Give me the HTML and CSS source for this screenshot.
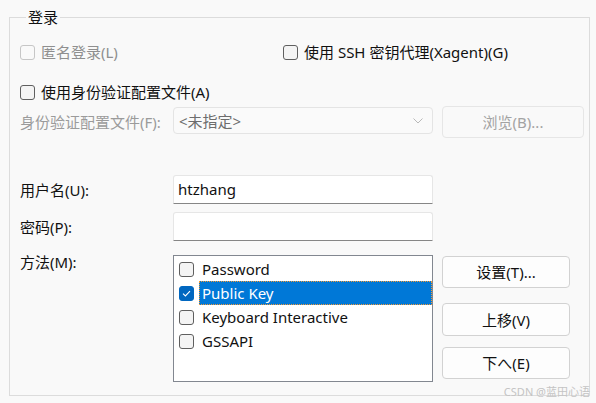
FILE: index.html
```html
<!DOCTYPE html>
<html lang="zh">
<head>
<meta charset="utf-8">
<link rel="stylesheet" href="styles.css">
</head>
<body>
<fieldset class="group">
  <legend class="legend">登录</legend>

  <div class="row row-top">
    <label class="check disabled anon"><span class="box"></span>匿名登录(L)</label>
    <label class="check"><span class="box"></span>使用 SSH 密钥代理(Xagent)(G)</label>
  </div>

  <div class="row row-auth">
    <label class="check"><span class="box"></span>使用身份验证配置文件(A)</label>
  </div>

  <div class="row row-file">
    <span class="lbl disabled">身份验证配置文件(F):</span>
    <div class="combo">
      <span>&lt;未指定&gt;</span>
      <svg class="chev" width="10" height="6" viewBox="0 0 10 6"><path d="M0.5 0.5 L5 5 L9.5 0.5" fill="none" stroke="#b9b9b9" stroke-width="1"/></svg>
    </div>
    <button class="btn btn-browse" disabled>浏览(B)...</button>
  </div>

  <div class="row row-user">
    <span class="lbl">用户名(U):</span>
    <div class="input">htzhang</div>
  </div>

  <div class="row row-pass">
    <span class="lbl">密码(P):</span>
    <div class="input"></div>
  </div>

  <div class="row row-method">
    <span class="lbl lbl-method">方法(M):</span>
    <div class="list">
      <div class="item"><span class="box"></span><span class="itext">Password</span></div>
      <div class="item"><span class="box checked"><svg width="15" height="15" viewBox="0 0 15 15"><path d="M4 7.6 L6.4 10 L11 5.2" fill="none" stroke="#fff" stroke-width="1.1"/></svg></span><span class="itext sel">Public Key</span></div>
      <div class="item"><span class="box"></span><span class="itext">Keyboard Interactive</span></div>
      <div class="item"><span class="box"></span><span class="itext">GSSAPI</span></div>
    </div>
    <div class="btns">
      <button class="btn b1">设置(T)...</button>
      <button class="btn b2">上移(V)</button>
      <button class="btn b3">下へ(E)</button>
    </div>
  </div>
</fieldset>
<div class="watermark">CSDN @蓝田心语</div>
</body>
</html>
```
FILE: styles.css
```css
html, body {
  margin: 0;
  padding: 0;
  background: #f9f9f9;
  width: 596px;
  height: 403px;
  overflow: hidden;
  font-family: "Noto Sans", "Noto Sans CJK SC", sans-serif;
  font-size: 15px;
  color: #111;
}
body { position: relative; }

.group {
  margin: 8px 0 0 9px;
  width: 581px;
  height: 388px;
  padding: 0 0 0 10px;
  border: 1px solid #dcdcdc;
  box-sizing: border-box;
  min-width: 0;
}
.legend {
  margin-left: 6px;
  padding: 0 2px;
  line-height: 18px;
  height: 18px;
  font-size: 15px;
}

.row {
  display: flex;
  align-items: center;
}
.row-top { margin-top: 14px; height: 24px; }
.row-auth { margin-top: 16px; height: 24px; }
.row-file { margin-top: 2px; height: 32px; align-items: flex-start; }
.row-user { margin-top: 37px; height: 29px; }
.row-pass { margin-top: 8px; height: 29px; }
.row-method { margin-top: 11px; align-items: flex-start; }

.check {
  display: flex;
  align-items: center;
  line-height: 20px;
  white-space: nowrap;
}
.check .box { margin-right: 6px; }
.anon { width: 263px; flex: none; }

.box {
  display: inline-block;
  width: 13px;
  height: 13px;
  border: 1px solid #5f5f5f;
  border-radius: 3px;
  background: #f4f4f4;
  flex: none;
}
.disabled { color: #8f8f8f; }
.check.disabled .box { border-color: #c6c6c6; background: #f9f9f9; }

.lbl {
  width: 153px;
  flex: none;
  line-height: 20px;
  white-space: nowrap;
}
.row-file .lbl { margin-top: 6px; color: #9b9b9b; }

.combo {
  margin-top: 1px;
  border: 1px solid #e4e4e4;
  border-radius: 4px;
  background: #fafafa;
  display: flex;
  align-items: center;
  justify-content: space-between;
  padding: 0 9px 0 5px;
  box-sizing: border-box;
  width: 260px;
  height: 27px;
  color: #6d6d6d;
}

.btn {
  font-family: inherit;
  font-size: 15px;
  border: 1px solid #d2d2d2;
  border-radius: 4px;
  background: #fdfdfd;
  color: #111;
  padding: 0;
  height: 32px;
  line-height: 20px;
  box-sizing: border-box;
}
.btn-browse {
  margin-left: 9px;
  width: 142px;
  border-color: #e6e6e6;
  background: #f9f9f9;
  color: #a3a3a3;
}

.input {
  width: 260px;
  height: 29px;
  box-sizing: border-box;
  background: #ffffff;
  border: 1px solid #e6e6e6;
  border-bottom: 1px solid #868686;
  border-radius: 3px 3px 0 0;
  padding: 0 4px;
  line-height: 26px;
  color: #111;
}

.list {
  margin-top: 3px;
  width: 260px;
  height: 127px;
  box-sizing: border-box;
  border: 1px solid #828790;
  background: #fff;
  padding: 1px 0 0 5px;
}
.item {
  display: flex;
  align-items: center;
  height: 24px;
}
.item .box { margin-right: 5px; }
.box.checked {
  background: #0067c0;
  border-color: #0067c0;
}
.box.checked svg { display: block; margin: -1px 0 0 -1px; }
.itext {
  line-height: 22px;
  padding-left: 2px;
  border: 1px solid transparent;
  white-space: nowrap;
}
.itext.sel {
  flex: 1;
  background: #0078d7;
  color: #fff;
  border: 1px dotted #f39a36;
}

.btns {
  display: flex;
  flex-direction: column;
  margin-left: 9px;
  margin-top: 4px;
}
.btns .btn { width: 128px; }
.b2 { margin-top: 15px; height: 33px; }
.b3 { margin-top: 11px; }

.watermark {
  position: absolute;
  right: 6px;
  bottom: 4px;
  font-size: 11px;
  color: #c4c4c4;
  line-height: 14px;
}
```
